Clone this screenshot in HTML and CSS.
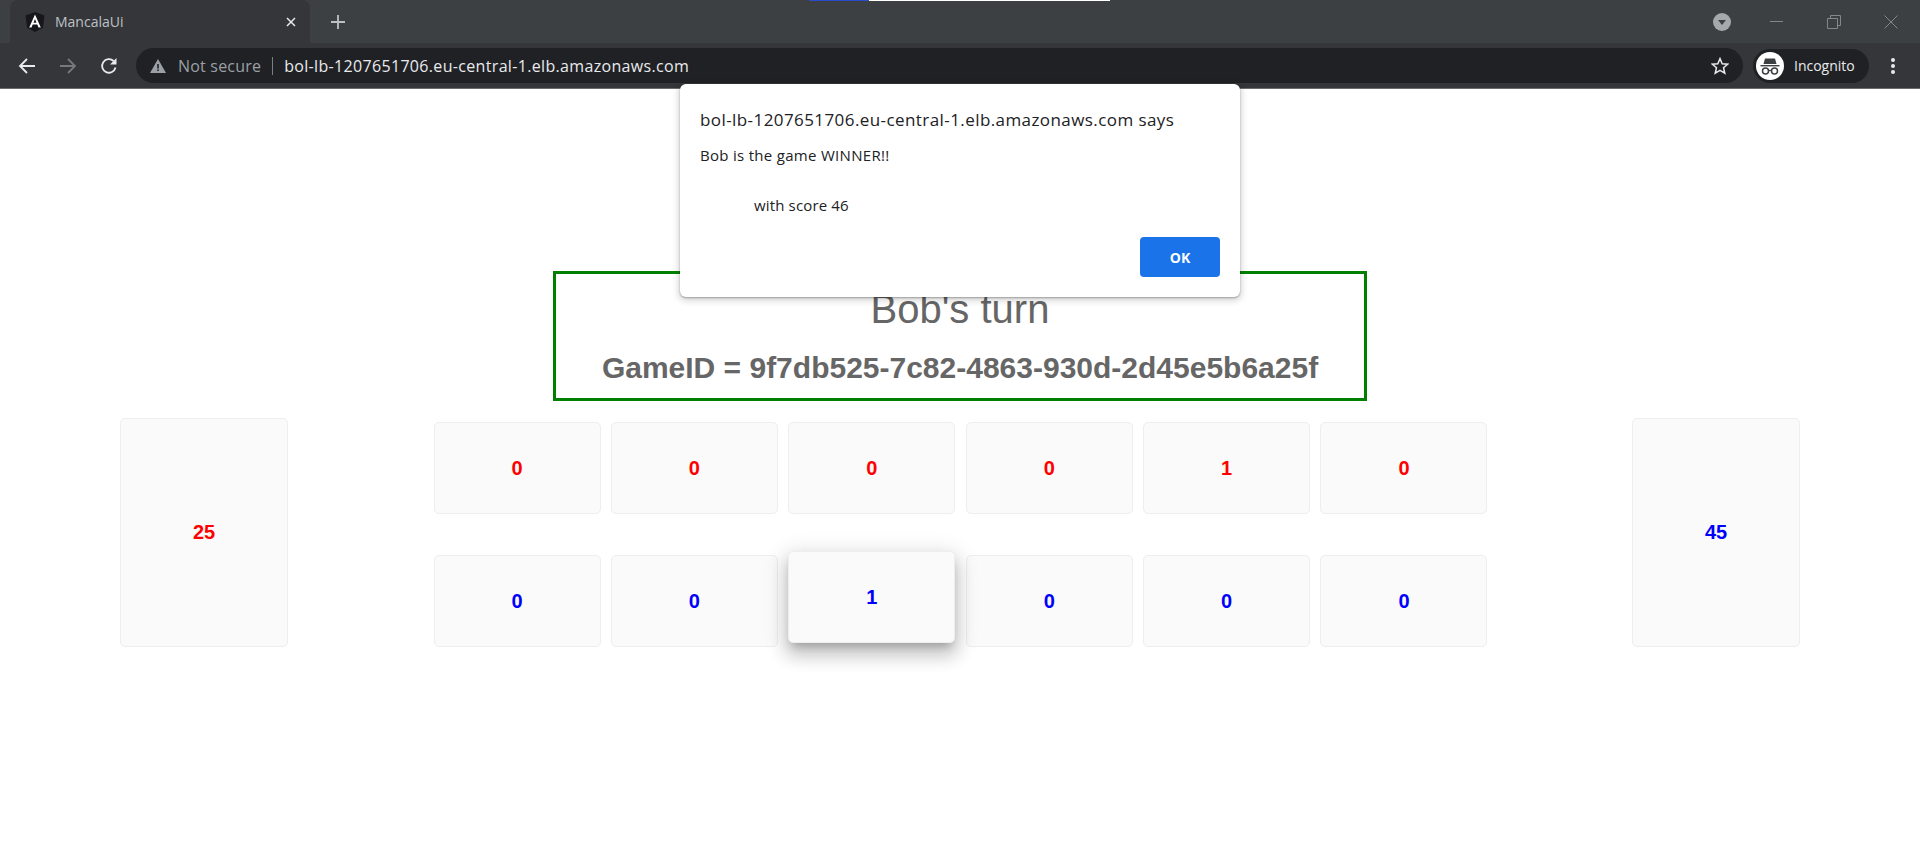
FILE: index.html
```html
<!DOCTYPE html>
<html lang="en">
<head>
  <meta charset="UTF-8">
  <title>MancalaUi</title>
  <link rel="stylesheet" href="styles.css">
</head>
<body>
  <!-- Browser frame -->
  <header class="browser">
    <div class="loading-bar"><span class="loading-done"></span></div>

    <div class="tabstrip">
      <div class="tab">
        <svg class="favicon" viewBox="0 0 20 20">
          <path d="M10 0 19.5 3.4 18 15.8 10 20 2 15.8 .5 3.4Z" fill="#17171b"/>
          <path d="M10 2.4 4.2 15.6H6.5L7.7 12.6H12.3L13.5 15.6H15.8ZM8.5 10.7 10 7 11.5 10.7Z" fill="#fff"/>
        </svg>
        <span class="tab-title">MancalaUi</span>
        <svg class="tab-close" viewBox="0 0 10 10">
          <path d="M1 1 9 9M9 1 1 9" stroke="#e8eaed" stroke-width="1.5" fill="none"/>
        </svg>
      </div>
      <svg class="new-tab" viewBox="0 0 14 14">
        <path d="M7 0V14M0 7H14" stroke="#bdc1c6" stroke-width="1.8" fill="none"/>
      </svg>
      <div class="window-controls">
        <svg class="tab-search" viewBox="0 0 18 18">
          <circle cx="9" cy="9" r="9" fill="#a6a9ac"/>
          <path d="M5 7H13L9 12Z" fill="#3c4043"/>
        </svg>
        <svg class="win-btn" viewBox="0 0 14 14">
          <path d="M0 6.5H13" stroke="#83878b" fill="none"/>
        </svg>
        <svg class="win-btn" viewBox="0 0 14 14">
          <path d="M.5 3.5H10.5V13.5H.5ZM3.5 3.5V.5H13.5V10.5H10.5" stroke="#83878b" fill="none"/>
        </svg>
        <svg class="win-btn" viewBox="0 0 14 14">
          <path d="M.5 .5 13.5 13.5M13.5 .5 .5 13.5" stroke="#83878b" fill="none"/>
        </svg>
      </div>
    </div>

    <div class="toolbar">
      <svg class="nav-icon" viewBox="0 0 18 18">
        <path d="M17 9H2M9 2 2 9 9 16" stroke="#e8eaed" stroke-width="1.8" fill="none"/>
      </svg>
      <svg class="nav-icon" viewBox="0 0 18 18">
        <path d="M1 9H16M9 2 16 9 9 16" stroke="#75787c" stroke-width="1.8" fill="none"/>
      </svg>
      <svg class="nav-icon" viewBox="0 0 18 18">
        <path d="M15.5 10.5A6.8 6.8 0 1 1 13.6 4" stroke="#e8eaed" stroke-width="1.8" fill="none"/>
        <path d="M16.5 1V7.5H10Z" fill="#e8eaed"/>
      </svg>

      <div class="omnibox">
        <svg class="warn-icon" viewBox="0 0 16 14">
          <path d="M8 0 16 14H0Z" fill="#9aa0a6"/>
          <path d="M7.2 5H8.8V9.4H7.2ZM7.2 10.4H8.8V12H7.2Z" fill="#202124"/>
        </svg>
        <span class="not-secure">Not secure</span>
        <span class="omni-sep"></span>
        <span class="url">bol-lb-1207651706.eu-central-1.elb.amazonaws.com</span>
        <svg class="star-icon" viewBox="0 0 18 18">
          <path d="M9 1.6 11.2 6.7 16.7 7.2 12.5 10.8 13.8 16.2 9 13.4 4.2 16.2 5.5 10.8 1.3 7.2 6.8 6.7Z" stroke="#e8eaed" stroke-width="1.5" fill="none"/>
        </svg>
      </div>

      <div class="profile">
        <svg class="profile-icon" viewBox="0 0 28 28">
          <circle cx="14" cy="14" r="14" fill="#fff"/>
          <path d="M9 6.5H19L20.5 12H7.5Z" fill="#3c4043"/>
          <path d="M4.5 13H23.5V14.4H4.5Z" fill="#3c4043"/>
          <circle cx="9.5" cy="19" r="3" stroke="#3c4043" stroke-width="1.5" fill="none"/>
          <circle cx="18.5" cy="19" r="3" stroke="#3c4043" stroke-width="1.5" fill="none"/>
          <path d="M12.5 18.5H15.5" stroke="#3c4043" stroke-width="1.3"/>
        </svg>
        <span class="profile-name">Incognito</span>
      </div>

      <div class="menu-dots"><i></i><i></i><i></i></div>
    </div>
  </header>

  <!-- Game page -->
  <main class="page">
    <div class="status">
      <h1 class="turn">Bob's turn</h1>
      <h2 class="game-id">GameID = 9f7db525-7c82-4863-930d-2d45e5b6a25f</h2>
    </div>

    <div class="board">
      <div class="card store red">25</div>

      <div class="pits">
        <div class="card red">0</div>
        <div class="card red">0</div>
        <div class="card red">0</div>
        <div class="card red">0</div>
        <div class="card red">1</div>
        <div class="card red">0</div>

        <div class="card blue">0</div>
        <div class="card blue">0</div>
        <div class="card blue hovered">1</div>
        <div class="card blue">0</div>
        <div class="card blue">0</div>
        <div class="card blue">0</div>
      </div>

      <div class="card store blue">45</div>
    </div>
  </main>

  <!-- Alert on top of the page -->
  <div class="alert">
    <div class="alert-title">bol-lb-1207651706.eu-central-1.elb.amazonaws.com says</div>
    <p class="alert-line">Bob is the game WINNER!!</p>
    <p class="alert-line alert-indent">with score 46</p>
    <div class="alert-actions">
      <button class="alert-ok">OK</button>
    </div>
  </div>
</body>
</html>
```

FILE: styles.css
```css
* {
  box-sizing: border-box;
  margin: 0;
  padding: 0;
}

body {
  font-family: "Liberation Sans", Arial, sans-serif;
  background: #fff;
  height: 860px;
  overflow: hidden;
}

/* Browser frame */
.browser {
  font-family: "Open Sans", sans-serif;
  background: #35363a;
  height: 89px;
  border-bottom: 1px solid #6a6d70;
}

.loading-bar {
  position: absolute;
  left: 809px;
  top: 0;
  width: 301px;
  height: 1px;
  background: #fff;
}

.loading-done {
  display: block;
  width: 60px;
  height: 1px;
  background: #2b4bc8;
}

.tabstrip {
  display: flex;
  align-items: center;
  height: 43px;
  background: #3c4043;
  padding-left: 10px;
}

.tab {
  display: flex;
  align-items: center;
  width: 300px;
  height: 43px;
  padding: 0 14px 0 15px;
  background: #35363a;
  border-radius: 8px 8px 0 0;
}

.favicon {
  width: 20px;
  height: 20px;
}

.tab-title {
  flex: 1;
  margin-left: 10px;
  font-size: 14px;
  color: #bdc1c6;
}

.tab-close {
  width: 10px;
  height: 10px;
}

.new-tab {
  width: 14px;
  height: 14px;
  margin-left: 21px;
}

.window-controls {
  display: flex;
  align-items: center;
  margin-left: auto;
  padding-right: 22px;
  gap: 43px;
}

.tab-search {
  width: 18px;
  height: 18px;
  margin-right: -4px;
}

.win-btn {
  width: 14px;
  height: 14px;
}

.toolbar {
  display: flex;
  align-items: center;
  height: 45px;
  padding: 0 0 0 18px;
}

.nav-icon {
  width: 18px;
  height: 18px;
  margin-right: 23px;
}

.nav-icon:nth-of-type(3) {
  margin-right: 18px;
}

.omnibox {
  display: flex;
  align-items: center;
  width: 1607px;
  height: 35px;
  padding: 0 14px 0 14px;
  background: #202124;
  border-radius: 18px;
}

.warn-icon {
  width: 16px;
  height: 14px;
}

.not-secure {
  margin-left: 12px;
  font-size: 16px;
  letter-spacing: .2px;
  color: #9aa0a6;
}

.omni-sep {
  width: 1px;
  height: 18px;
  margin: 0 11px;
  background: #7b7e82;
}

.url {
  font-size: 16px;
  letter-spacing: .33px;
  color: #e8eaed;
}

.star-icon {
  width: 18px;
  height: 18px;
  margin-left: auto;
}

.profile {
  display: flex;
  align-items: center;
  width: 116px;
  height: 34px;
  margin-left: 10px;
  padding-left: 3px;
  background: #202124;
  border-radius: 17px;
}

.profile-icon {
  width: 28px;
  height: 28px;
}

.profile-name {
  margin-left: 10px;
  font-size: 14px;
  color: #e8eaed;
}

.menu-dots {
  display: flex;
  flex-direction: column;
  gap: 2px;
  margin-left: 22px;
}

.menu-dots i {
  display: block;
  width: 4px;
  height: 4px;
  border-radius: 50%;
  background: #e8eaed;
}

/* Game page */
.page {
  padding: 182px 120px 0;
}

.status {
  width: 814px;
  height: 130px;
  margin: 0 auto;
  border: 3px solid #008000;
  text-align: center;
  color: #666;
}

.turn {
  font-size: 40px;
  font-weight: 400;
  line-height: 46px;
  margin-top: 12px;
}

.game-id {
  font-size: 30px;
  font-weight: 700;
  line-height: 34px;
  margin-top: 19px;
}

.board {
  display: grid;
  grid-template-columns: 168px 1fr 168px;
  margin-top: 17px;
}

.pits {
  display: grid;
  grid-template-columns: repeat(6, 167px);
  grid-auto-rows: 92px;
  column-gap: 10.4px;
  row-gap: 41px;
  justify-content: center;
  padding: 4px 0 0 1px;
}

.card {
  display: flex;
  align-items: center;
  justify-content: center;
  background: #fafafa;
  border: 1px solid #eee;
  border-radius: 5px;
  font-size: 20px;
  font-weight: 700;
}

.store {
  height: 229px;
}

.red {
  color: #f00;
}

.blue {
  color: #00f;
}

.hovered {
  transform: translateY(-4px);
  box-shadow: 0 7px 8px -4px rgba(0, 0, 0, .2), 0 12px 17px 2px rgba(0, 0, 0, .14), 0 5px 22px 4px rgba(0, 0, 0, .12);
}

/* Alert */
.alert {
  position: absolute;
  left: 680px;
  top: 84px;
  width: 560px;
  height: 213px;
  padding: 24px 20px 0;
  font-family: "Open Sans", sans-serif;
  background: #fff;
  border-radius: 6px;
  box-shadow: 0 1px 2px rgba(0, 0, 0, .3), 0 2px 6px 2px rgba(0, 0, 0, .15);
}

.alert-title {
  font-size: 17px;
  letter-spacing: .42px;
  line-height: 24px;
  color: #202124;
}

.alert-line {
  font-size: 15px;
  letter-spacing: .3px;
  line-height: 20px;
  margin-top: 13px;
  color: #202124;
}

.alert-indent {
  margin-top: 30px;
  padding-left: 54px;
  letter-spacing: .15px;
}

.alert-actions {
  display: flex;
  justify-content: flex-end;
  margin-top: 22px;
}

.alert-ok {
  width: 80px;
  height: 40px;
  border: none;
  border-radius: 4px;
  background: #1a73e8;
  color: #fff;
  font-family: "Open Sans", sans-serif;
  font-size: 14px;
  font-weight: 700;
}
```
